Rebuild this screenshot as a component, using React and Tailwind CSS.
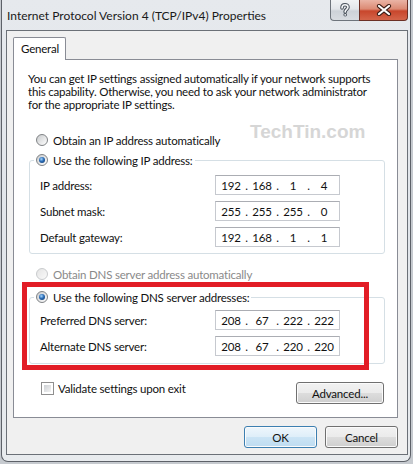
import React from "react";

function Radio({ checked = false, disabled = false }) {
  if (disabled) {
    return (
      <span className="w-[12px] h-[12px] rounded-full border border-[#c9cbcd] bg-gradient-to-br from-[#e4e4e4] to-[#fafafa] shrink-0" />
    );
  }
  return (
    <span className="w-[12px] h-[12px] rounded-full border border-[#7f8285] bg-gradient-to-br from-[#c9cbcd] to-[#ffffff] shrink-0 flex items-center justify-center">
      {checked && (
        <span className="w-[6px] h-[6px] rounded-full bg-[radial-gradient(circle_at_40%_35%,#a6d8ff_0%,#2a6bb5_45%,#0f3462_100%)]" />
      )}
    </span>
  );
}

function IpBox({ parts }) {
  return (
    <div className="w-[125px] h-[20px] border border-[#c6c9cf] border-t-[#abadb3] bg-white flex items-center pl-[2px] text-[#111]">
      {parts.map((p, i) => (
        <React.Fragment key={i}>
          {i > 0 && <span className="w-[5px] text-center">.</span>}
          <span className="w-[26px] text-center">{p}</span>
        </React.Fragment>
      ))}
    </div>
  );
}

function Row({ label, parts }) {
  return (
    <div className="flex items-center h-[20px] pl-[10px]">
      <span className="w-[175px] text-[#111]">{label}</span>
      <IpBox parts={parts} />
    </div>
  );
}

function Button({ children, primary = false, className = "" }) {
  const look = primary
    ? "border-[#3c7fb1] bg-[linear-gradient(#eef6fc_0%,#deeef9_50%,#cbe4f5_50%,#bedcf1_100%)]"
    : "border-[#707070] bg-[linear-gradient(#f2f2f2_0%,#ebebeb_50%,#dddddd_50%,#cfcfcf_100%)]";
  return (
    <div
      className={`h-[22px] rounded-[3px] border ${look} shadow-[inset_0_0_0_1px_#fbfbfb] flex items-center justify-center text-[#111] ${className}`}
    >
      {children}
    </div>
  );
}

export default function App() {
  return (
    <div className="w-[413px] h-[464px] bg-[#c6cacf] overflow-hidden font-['Lato',sans-serif] text-[11.5px] leading-[13px]">
      <div className="ml-[1px] w-[410px] h-[462px] border-x border-b border-[#5d6168] rounded-b-[7px] bg-gradient-to-b from-[#e6e9ed] via-[#e1e5ea] to-[#e8ebee] flex flex-col">
        {/* Title bar */}
        <div className="h-[30px] flex items-start shrink-0">
          <span className="ml-[5px] mt-[9px] text-[12px] leading-[14px] text-[#1a1a1a] whitespace-nowrap">
            Internet Protocol Version 4 (TCP/IPv4) Properties
          </span>
          <div className="ml-auto mr-[2px] flex">
            <div className="w-[29px] h-[21px] rounded-bl-[4px] border border-t-0 border-r-0 border-[#6e747c] bg-[linear-gradient(#f1f3f5_0%,#e3e6ea_45%,#cdd2d8_55%,#d8dce1_100%)] flex items-center justify-center">
              <svg width="12" height="14" viewBox="0 0 12 14">
                <path d="M3 5 C3 2.5 4.5 1.8 6 1.8 C7.8 1.8 9 2.8 9 4.3 C9 6.2 6.2 6.4 6.2 8.6 V9" fill="none" stroke="#4a525c" strokeWidth="3.6" strokeLinecap="round" />
                <circle cx="6.2" cy="11.8" r="1.8" fill="#4a525c" />
                <path d="M3 5 C3 2.5 4.5 1.8 6 1.8 C7.8 1.8 9 2.8 9 4.3 C9 6.2 6.2 6.4 6.2 8.6 V9" fill="none" stroke="#f4f6f8" strokeWidth="1.6" strokeLinecap="round" />
                <circle cx="6.2" cy="11.8" r="0.9" fill="#f4f6f8" />
              </svg>
            </div>
            <div className="w-[49px] h-[21px] rounded-br-[4px] border border-t-0 border-[#6b2f25] bg-[linear-gradient(#eab4a5_0%,#dc8a74_45%,#c8462c_55%,#d4654a_100%)] flex items-center justify-center">
              <svg width="16" height="12" viewBox="0 0 16 12">
                <path d="M3 2 L13 10 M13 2 L3 10" stroke="#3d1d16" strokeWidth="4.2" strokeLinecap="round" />
                <path d="M3 2 L13 10 M13 2 L3 10" stroke="#ffffff" strokeWidth="2.2" strokeLinecap="round" />
              </svg>
            </div>
          </div>
        </div>

        {/* Client area */}
        <div className="ml-[4px] w-[402px] h-[425px] border border-[#6b7077] bg-[#f0f0f0] flex flex-col pt-[6px] pl-[6px] shrink-0 tracking-[-0.2px]">
          <div className="self-start w-[53px] h-[23px] -mb-[1px] relative z-10 bg-white border border-b-0 border-[#898c95] rounded-t-[2px] pl-[7px] leading-[22px] text-[#111]">
            General
          </div>

          <div className="w-[385px] h-[359px] bg-white border border-[#898c95] relative flex flex-col">
            <p className="mt-[12px] ml-[14px] whitespace-nowrap text-[#111]">
              You can get IP settings assigned automatically if your network supports
              <br />
              this capability. Otherwise, you need to ask your network administrator
              <br />
              for the appropriate IP settings.
            </p>

            <div className="mt-[22px] ml-[22px] h-[14px] flex items-center gap-[5px] text-[#111]">
              <Radio />
              <span>Obtain an IP address automatically</span>
            </div>

            <fieldset className="mt-[6px] ml-[15px] w-[356px] border border-[#d5dfe5] rounded-[3px] pt-[8px] pb-[6px]">
              <legend className="ml-[4px] px-[2px]">
                <span className="h-[14px] flex items-center gap-[5px] text-[#111]">
                  <Radio checked />
                  <span>Use the following IP address:</span>
                </span>
              </legend>
              <div className="flex flex-col gap-[6px]">
                <Row label="IP address:" parts={["192", "168", "1", "4"]} />
                <Row label="Subnet mask:" parts={["255", "255", "255", "0"]} />
                <Row label="Default gateway:" parts={["192", "168", "1", "1"]} />
              </div>
            </fieldset>

            <div className="mt-[13px] ml-[22px] h-[14px] flex items-center gap-[5px] text-[#8a8a8a]">
              <Radio disabled />
              <span>Obtain DNS server address automatically</span>
            </div>

            <fieldset className="mt-[9px] ml-[15px] w-[356px] border border-[#d5dfe5] rounded-[3px] pt-[6px] pb-[7px]">
              <legend className="ml-[4px] px-[2px]">
                <span className="h-[14px] flex items-center gap-[5px] text-[#111]">
                  <Radio checked />
                  <span>Use the following DNS server addresses:</span>
                </span>
              </legend>
              <div className="flex flex-col gap-[6px]">
                <Row label="Preferred DNS server:" parts={["208", "67", "222", "222"]} />
                <Row label="Alternate DNS server:" parts={["208", "67", "220", "220"]} />
              </div>
            </fieldset>

            <div className="mt-[18px] flex items-start">
              <div className="ml-[27px] h-[13px] flex items-center gap-[4px] text-[#111]">
                <span className="w-[13px] h-[13px] border border-[#8f8f8f] bg-white p-[2px] shrink-0">
                  <span className="block w-full h-full bg-gradient-to-br from-[#cdd0d4] to-[#f3f3f3]" />
                </span>
                <span>Validate settings upon exit</span>
              </div>
              <Button className="ml-auto mr-[13px] w-[88px]">Advanced...</Button>
            </div>

            {/* watermark */}
            <div className="absolute left-[236px] top-[61px] font-['Liberation_Sans',sans-serif] font-bold text-[19px] leading-[22px] tracking-normal text-[#d6d6d6] whitespace-nowrap">
              TechTin.com
            </div>

            {/* red highlight */}
            <div className="absolute left-[8px] top-[222px] w-[347px] h-[88px] border-[5px] border-[#e21d26]" />
          </div>

          <div className="mt-[8px] w-[385px] flex justify-end gap-[8px]">
            <Button primary className="w-[73px]">OK</Button>
            <Button className="w-[73px]">Cancel</Button>
          </div>
        </div>
      </div>
    </div>
  );
}
